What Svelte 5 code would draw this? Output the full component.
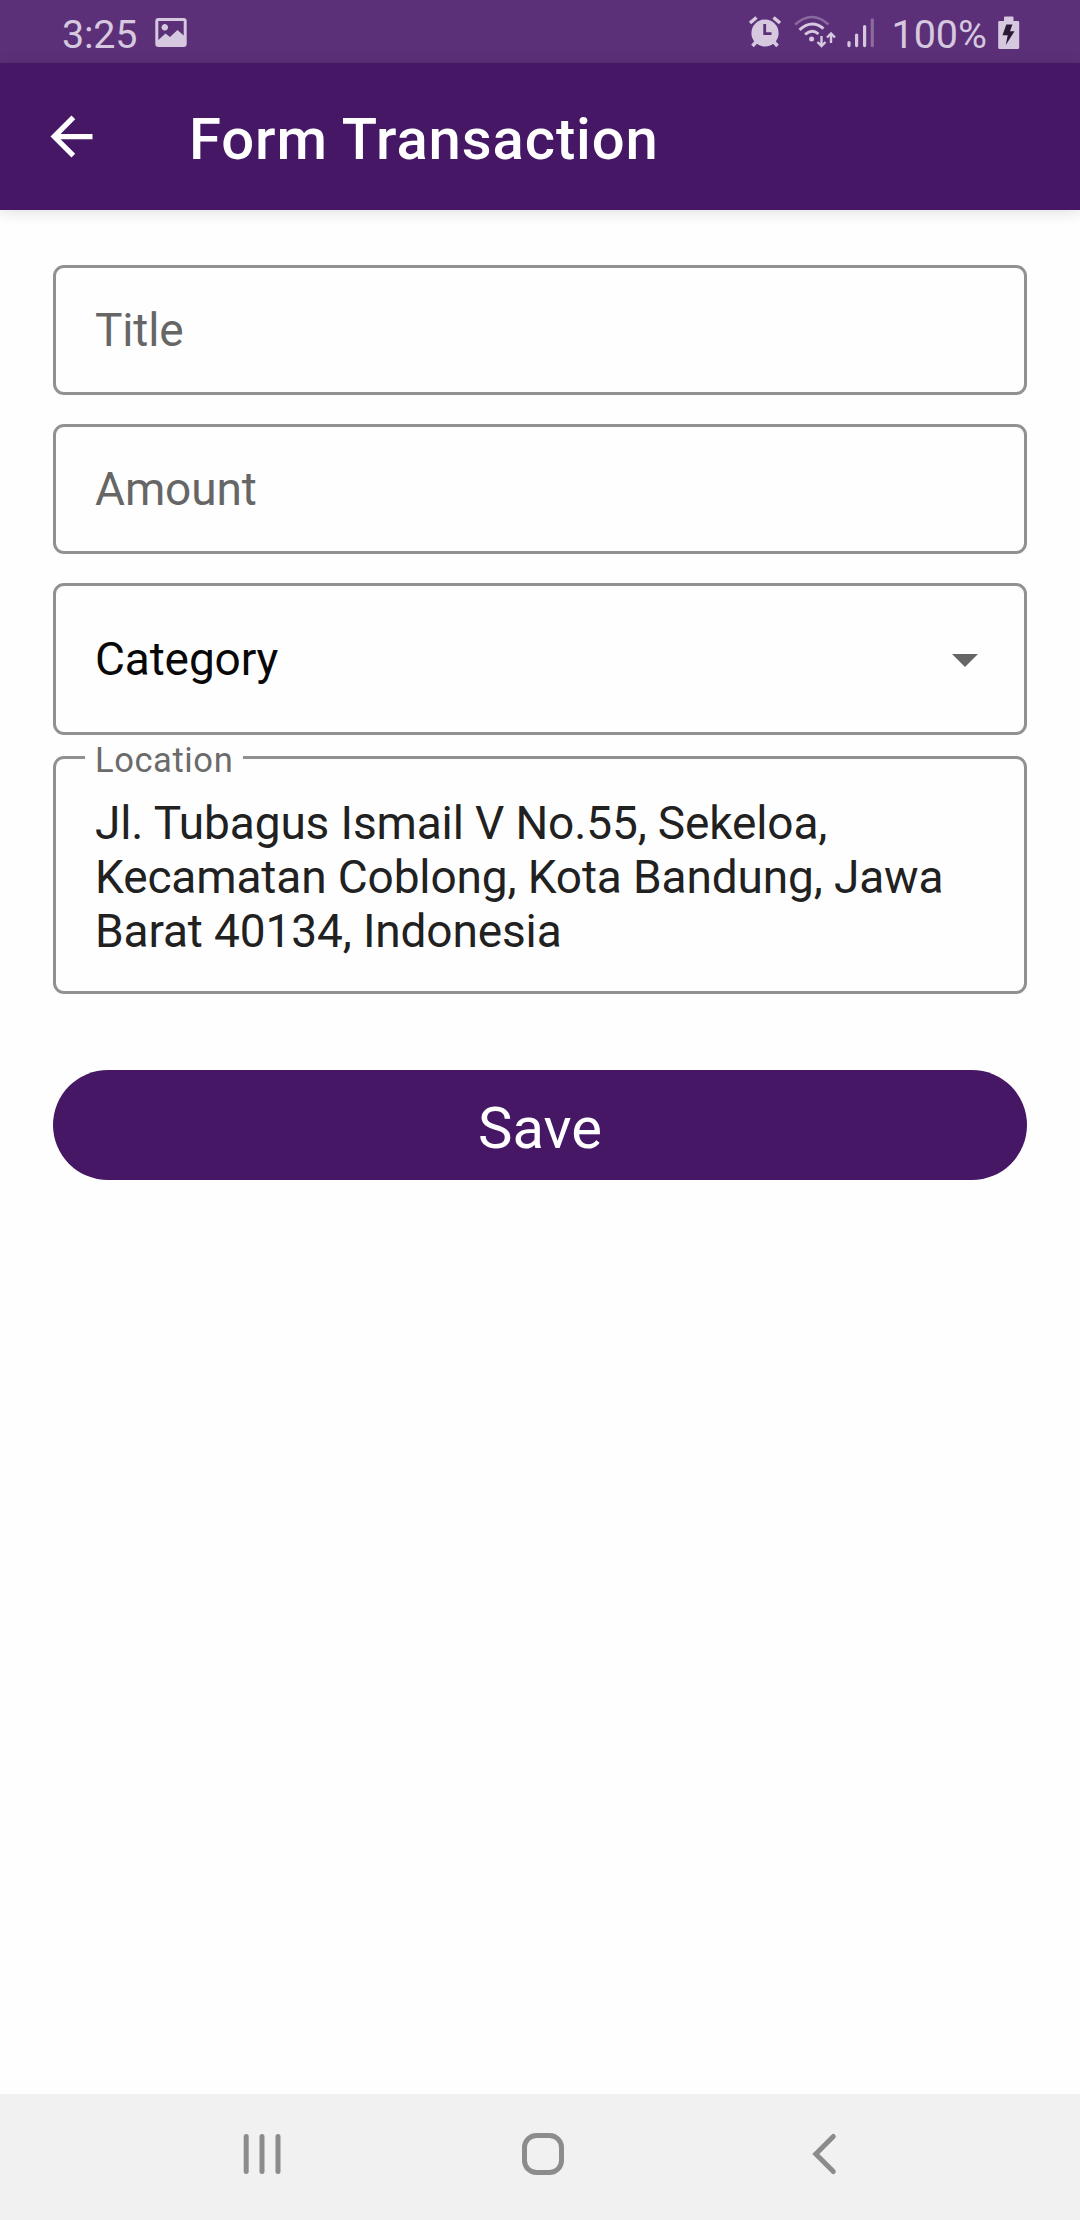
<script>
  const fields = ['Title', 'Amount'];
</script>

<div class="screen">
  <div class="status">
    <span class="time">3:25</span>
    <svg class="picture" width="32" height="30" viewBox="0 0 32 30">
      <path
        fill="currentColor"
        fill-rule="evenodd"
        d="M3.500 0H28.500A3.200 3.200 0 0 1 31.700 3.200V25.800A3.200 3.200 0 0 1 28.500 29H3.500A3.200 3.200 0 0 1 .3 25.800V3.200A3.200 3.200 0 0 1 3.500 0ZM3.300 3V22L10.500 15.500L15 19L22.500 12L28.700 17.500V3ZM9.800 6A3.300 3.300 0 1 1 9.790 6Z"
      />
    </svg>
    <div class="indicators">
      <svg class="alarm" width="34" height="32" viewBox="0 0 34 32">
        <g stroke="currentColor" fill="none">
          <path d="M2 7L8.500 1.500M25.500 1.500L32 7" stroke-width="3.600" />
          <path d="M8 26L4.500 30M26 26L29.500 30" stroke-width="3.600" />
        </g>
        <circle cx="17" cy="17" r="13.600" fill="currentColor" />
        <path class="hands" d="M16.700 8V17.600H23.500" fill="none" stroke-width="2.800" />
      </svg>
      <svg class="wifi" width="42" height="34" viewBox="0 0 42 34" fill="none" stroke="currentColor">
        <path d="M1.200 9.500Q18 -5.500 34.500 9.500" stroke-width="2.600" opacity=".38" />
        <path d="M5.500 14.800Q18 3.800 29.500 13.700" stroke-width="2.900" />
        <path d="M11 19.500Q18 13.300 24.500 19" stroke-width="2.900" />
        <circle cx="17.600" cy="24" r="2.500" fill="currentColor" stroke="none" />
        <path d="M27.500 21V30.500M23.500 27L27.500 31L31.500 27" stroke-width="2.400" />
        <path d="M37 28V19M33 22.500L37 18.500L41 22.500" stroke-width="2.400" />
      </svg>
      <svg class="signal" width="28" height="32" viewBox="0 0 28 32" stroke="currentColor" stroke-width="3.200" stroke-linecap="round">
        <path d="M2 25.500V28.600M9.600 18V28.600M17.600 9.500V28.600" />
        <path d="M25.300 2.800V28.600" opacity=".38" />
      </svg>
      <span class="percent">100%</span>
      <svg class="battery" width="22" height="34" viewBox="0 0 22 34">
        <path
          fill="currentColor"
          d="M6 1.500Q6 .5 7 .5H14.500Q15.500 .5 15.500 1.500V5H20Q21.200 5 21.200 6.200V31.500Q21.200 33 19.700 33H1.700Q.2 33 .2 31.500V6.200Q.2 5 1.400 5H6Z"
        />
        <path class="bolt" d="M8.300 8.500H14.500L12 15.300H16.500L7.800 29L9.700 19.300H4.500Z" />
      </svg>
    </div>
  </div>

  <header>
    <svg class="back" width="63" height="63" viewBox="0 0 24 24">
      <path fill="#fff" d="M20 11H7.830l5.590-5.590L12 4l-8 8 8 8 1.410-1.410L7.830 13H20v-2z" />
    </svg>
    <h1>Form Transaction</h1>
  </header>

  <main>
    {#each fields as name}
      <div class="field">{name}</div>
    {/each}
    <div class="field select">
      <span>Category</span>
      <svg class="caret" width="26" height="13" viewBox="0 0 26 13"><path fill="#666" d="M0 0H26L13 13Z" /></svg>
    </div>
    <div class="field location">
      <span class="label">Location</span>
      Jl. Tubagus Ismail V No.55, Sekeloa,<br />Kecamatan Coblong, Kota Bandung, Jawa<br />Barat 40134, Indonesia
    </div>
    <button>Save</button>
  </main>

  <nav>
    <svg width="1080" height="126" viewBox="0 0 1080 126" fill="none" stroke="#8c8c8c" stroke-width="5" stroke-linecap="round">
      <path d="M246.200 42.500V77.500M262 42.500V77.500M278 42.500V77.500" />
      <rect x="524.500" y="41.500" width="37" height="37" rx="12" />
      <path d="M833.300 42.500L815.800 60L833.300 77.500" />
    </svg>
  </nav>
</div>

<style>
  :global(body) {
    background: #fefefe;
  }
  .screen {
    width: 1080px;
    height: 2220px;
    display: flex;
    flex-direction: column;
    font-family: Roboto, sans-serif;
    background: #fefefe;
    overflow: hidden;
  }
  svg {
    display: block;
    flex: none;
  }
  .status {
    height: 63px;
    flex: none;
    box-sizing: border-box;
    display: flex;
    align-items: flex-start;
    padding: 0 60px 0 62px;
    background: #5c3078;
    color: #d5c8df;
    font-size: 39.5px;
    line-height: 70px;
  }
  .time {
    letter-spacing: -0.2px;
  }
  .picture {
    margin: 18px 0 0 18px;
  }
  .indicators {
    margin-left: auto;
    display: flex;
    align-items: flex-start;
  }
  .alarm {
    margin-top: 16px;
  }
  .hands {
    stroke: #5c3078;
  }
  .wifi {
    margin: 15px 0 0 12px;
  }
  .signal {
    margin: 17px 0 0 11px;
  }
  .percent {
    margin-left: 16px;
  }
  .battery {
    margin: 16px 0 0 11px;
  }
  .bolt {
    fill: #2b1a35;
  }
  header {
    height: 147px;
    flex: none;
    display: flex;
    align-items: center;
    background: #451764;
    box-shadow: 0 2px 14px rgba(0, 0, 0, 0.13);
  }
  .back {
    margin-left: 40px;
  }
  h1 {
    margin: 5px 0 0 86px;
    font-size: 58px;
    font-weight: 500;
    letter-spacing: 0.9px;
    line-height: 68px;
    color: #fff;
    white-space: nowrap;
  }
  main {
    flex: 1;
    display: flex;
    flex-direction: column;
    padding: 55px 53px 0;
  }
  .field {
    box-sizing: border-box;
    height: 130px;
    margin-bottom: 29px;
    padding: 0 39px;
    display: flex;
    align-items: center;
    border: 3px solid #919191;
    border-radius: 11px;
    font-size: 46px;
    line-height: 54px;
    letter-spacing: -0.13px;
    color: #666;
  }
  .select {
    height: 152px;
    margin-bottom: 21px;
    padding-right: 46px;
    justify-content: space-between;
    color: #080808;
  }
  .caret {
    margin-top: 3px;
  }
  .location {
    position: relative;
    display: block;
    height: 238px;
    margin-bottom: 76px;
    padding-top: 37px;
    color: #212121;
    white-space: nowrap;
  }
  .label {
    position: absolute;
    left: 29px;
    top: -19px;
    width: 158px;
    box-sizing: border-box;
    padding-left: 10px;
    background: #fefefe;
    color: #6b6b6b;
    font-size: 34.5px;
    line-height: 40px;
    letter-spacing: 0.6px;
  }
  button {
    height: 110px;
    padding: 6px 0 0;
    border: 0;
    border-radius: 55px;
    background: #451764;
    color: #fff;
    font: 400 58px/68px Roboto, sans-serif;
  }
  nav {
    height: 126px;
    flex: none;
    background: #f1f1f1;
  }
</style>
